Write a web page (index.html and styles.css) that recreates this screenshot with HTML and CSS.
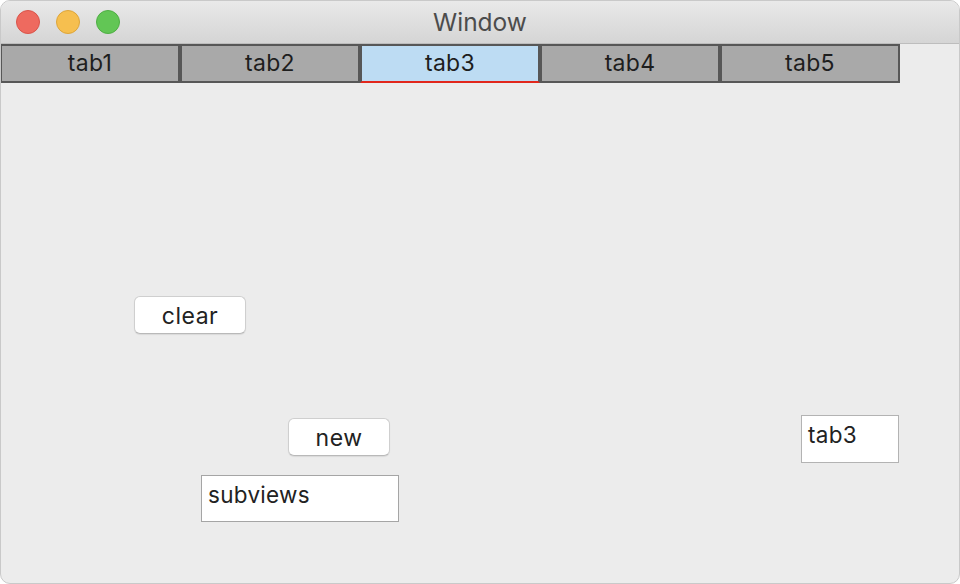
FILE: index.html
```html
<!DOCTYPE html>
<html>
<head>
<meta charset="utf-8">
<link rel="stylesheet" href="styles.css">
</head>
<body>
<div class="window">
  <div class="titlebar">
    <div class="lights">
      <span class="light red"></span>
      <span class="light yellow"></span>
      <span class="light green"></span>
    </div>
    <div class="title">Window</div>
  </div>
  <div class="tabs">
    <div class="tab">tab1</div>
    <div class="tab">tab2</div>
    <div class="tab active">tab3</div>
    <div class="tab">tab4</div>
    <div class="tab">tab5</div>
  </div>
  <div class="content">
    <button class="btn btn-clear">clear</button>
    <button class="btn btn-new">new</button>
    <div class="field field-subviews">subviews</div>
    <div class="field field-tab">tab3</div>
  </div>
</div>
</body>
</html>
```
FILE: styles.css
```css
html, body {
  margin: 0;
  padding: 0;
  background: #ffffff;
}
body {
  width: 960px;
  height: 584px;
  overflow: hidden;
  font-family: Inter, "Liberation Sans", sans-serif;
}
.window {
  width: 960px;
  height: 584px;
  background: #ececec;
  border-radius: 10px;
  overflow: hidden;
  display: flex;
  flex-direction: column;
  box-sizing: border-box;
  border: 1px solid #c9c9c9;
}
.titlebar {
  height: 42px;
  flex: none;
  position: relative;
  display: flex;
  align-items: center;
  justify-content: center;
  background: linear-gradient(#e9e9e9, #d5d5d5);
  border-bottom: 1px solid #bdbdbd;
}
.lights {
  position: absolute;
  left: 15px;
  top: 9px;
  display: flex;
  gap: 16px;
}
.light {
  width: 24px;
  height: 24px;
  border-radius: 50%;
  box-sizing: border-box;
}
.red { background: #ee6a5f; border: 1px solid #d9544a; }
.yellow { background: #f6bf4f; border: 1px solid #dda53a; }
.green { background: #62c655; border: 1px solid #4fae44; }
.title {
  font-size: 24.5px;
  color: #4c4c4c;
  padding-left: 0;
  padding-bottom: 1px;
}
.tabs {
  display: flex;
  height: 39px;
  flex: none;
  margin-left: -1px;
}
.tab {
  width: 180px;
  box-sizing: border-box;
  border: 2px solid #575757;
  background: #a9a9a9;
  color: #1e1e1e;
  font-size: 23px;
  letter-spacing: 0.3px;
  display: flex;
  align-items: center;
  justify-content: center;
  padding-bottom: 2px;
}
.tab.active {
  background: #bddcf3;
  border-bottom: 2px solid #e2271c;
}
.content {
  flex: 1;
  position: relative;
  margin-left: -1px;
}
.btn {
  position: absolute;
  background: #ffffff;
  border: 1px solid #cfcfcf;
  border-bottom-color: #b9b9b9;
  border-radius: 6px;
  box-shadow: 0 1px 1px rgba(0,0,0,0.08);
  font-family: Inter, "Liberation Sans", sans-serif;
  font-size: 23px;
  letter-spacing: 0.5px;
  color: #222;
  padding: 1px 0 0 0;
  box-sizing: border-box;
}
.btn-clear { left: 134px; top: 213px; width: 112px; height: 38px; }
.btn-new { left: 288px; top: 335px; width: 102px; height: 38px; }
.field {
  position: absolute;
  background: #ffffff;
  border: 1px solid #a5a5a5;
  box-sizing: border-box;
  font-size: 22.5px;
  letter-spacing: 0.3px;
  color: #222;
  padding: 5px 0 0 6px;
}
.field-subviews { left: 201px; top: 392px; width: 198px; height: 47px; }
.field-tab { left: 801px; top: 332px; width: 98px; height: 48px; border-color: #b3b3b3; }
```
